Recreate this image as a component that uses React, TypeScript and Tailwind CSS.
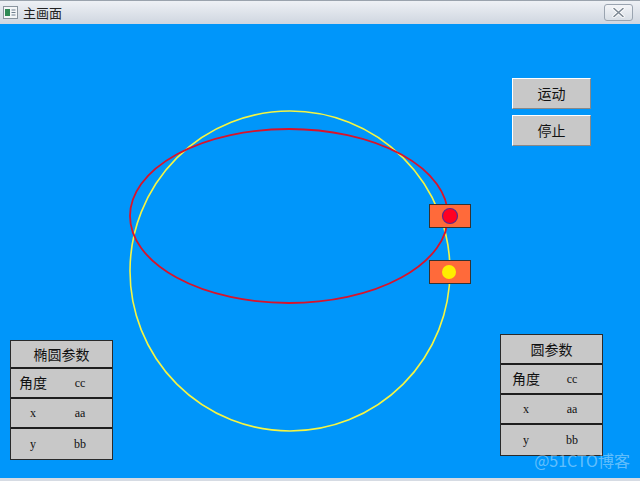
import React from "react";

const cjk = { fontFamily: '"Noto Sans CJK SC", "Noto Sans", sans-serif' };
const serif = { fontFamily: '"Liberation Serif", "DejaVu Serif", serif' };

function Panel({ title, cols, head }: { title: string; cols: [number, number]; head: number }) {
  const rows: [string, string, boolean][] = [
    ["角度", "cc", true],
    ["x", "aa", false],
    ["y", "bb", false],
  ];
  return (
    <div className="w-[103px] border border-[#2a2a2a] bg-[#c8c8c8] text-[#111]">
      <div
        className="flex items-center justify-center text-[14px] border-b-2 border-[#1e1e1e]"
        style={{ height: head, ...cjk }}
      >
        {title}
      </div>
      {rows.map(([a, b, big], i) => (
        <div
          key={i}
          className={`h-[30px] flex items-center ${i < 2 ? "border-b-2 border-[#1e1e1e]" : ""}`}
        >
          <span
            className={big ? "text-[14px] text-center -mt-[2px]" : "text-[12px] text-center"}
            style={{ width: cols[0], ...(big ? cjk : serif) }}
          >
            {a}
          </span>
          <span className="text-[12px] text-center" style={{ width: cols[1], ...serif }}>
            {b}
          </span>
        </div>
      ))}
    </div>
  );
}

function Btn({ label }: { label: string }) {
  return (
    <div
      className="w-[79px] h-[31px] flex items-center justify-center bg-[#c8c8c8] border border-t-white border-l-white border-r-[#888] border-b-[#888] text-[14px] text-[#111]"
      style={cjk}
    >
      {label}
    </div>
  );
}

export default function App() {
  return (
    <div className="w-[640px] h-[481px] flex flex-col overflow-hidden bg-[#d6dbe3]">
      {/* title bar */}
      <div className="h-[24px] flex items-center justify-between bg-gradient-to-b from-[#eef1f5] to-[#cfd6e0] border-t border-[#9aa3ad]">
        <div className="flex items-center gap-[5px] pl-[3px]">
          <svg width="15" height="13" viewBox="0 0 15 13">
            <rect x="0.5" y="0.5" width="14" height="12" fill="#f4f6f8" stroke="#8a949e" />
            <rect x="2" y="3" width="5" height="7" fill="#2f8a55" />
            <rect x="8.5" y="3.5" width="4" height="1" fill="#6f7f8e" />
            <rect x="8.5" y="6" width="4" height="1" fill="#6f7f8e" />
            <rect x="8.5" y="8.5" width="4" height="1" fill="#6f7f8e" />
          </svg>
          <span className="text-[13px] text-[#222]" style={cjk}>
            主画面
          </span>
        </div>
        <div className="mr-[7px] w-[29px] h-[17px] flex items-center justify-center rounded-[3px] border border-[#9aa4b0] bg-gradient-to-b from-[#f3f5f8] to-[#d8dee6]">
          <svg width="13" height="11" viewBox="0 0 13 11">
            <path d="M2 1.5 L11 9.5 M11 1.5 L2 9.5" stroke="#fff" strokeWidth="3.2" strokeLinecap="round" />
            <path d="M2 1.5 L11 9.5 M11 1.5 L2 9.5" stroke="#7d8894" strokeWidth="1.6" strokeLinecap="round" />
          </svg>
        </div>
      </div>

      {/* client area */}
      <div className="relative flex-1 bg-[#0096fa] mb-[3px]">
        <svg className="absolute inset-0" width="640" height="454" viewBox="0 24 640 454">
          <circle cx="290" cy="271" r="160" fill="none" stroke="#f5f542" strokeWidth="1.6" />
          <ellipse cx="289" cy="216" rx="159" ry="87" fill="none" stroke="#d9132a" strokeWidth="1.8" />
          <rect x="429.5" y="204.5" width="41" height="23" fill="#ff6a3a" stroke="#333" />
          <circle cx="450" cy="216" r="7.5" fill="#ff0022" stroke="#5a2a8a" strokeWidth="1.2" />
          <rect x="429.5" y="260.5" width="41" height="23" fill="#ff6a3a" stroke="#333" />
          <circle cx="449" cy="272" r="7" fill="#ffee00" />
        </svg>

        <div className="relative h-full flex justify-between">
          <div className="flex flex-col justify-end pl-[10px] pb-[18px]">
            <Panel title="椭圆参数" cols={[44, 50]} head={28} />
          </div>
          <div className="flex flex-col items-end pr-[37px] pb-[22px]">
            <div className="flex flex-col gap-[6px] pt-[54px] pr-[12px]">
              <Btn label="运动" />
              <Btn label="停止" />
            </div>
            <div className="flex-1" />
            <Panel title="圆参数" cols={[50, 42]} head={30} />
          </div>
        </div>

        <div
          className="absolute right-[10px] bottom-[6px] text-[16px] text-white/40"
          style={{ fontFamily: '"Noto Sans CJK SC", sans-serif' }}
        >
          @51CTO博客
        </div>
      </div>
    </div>
  );
}
